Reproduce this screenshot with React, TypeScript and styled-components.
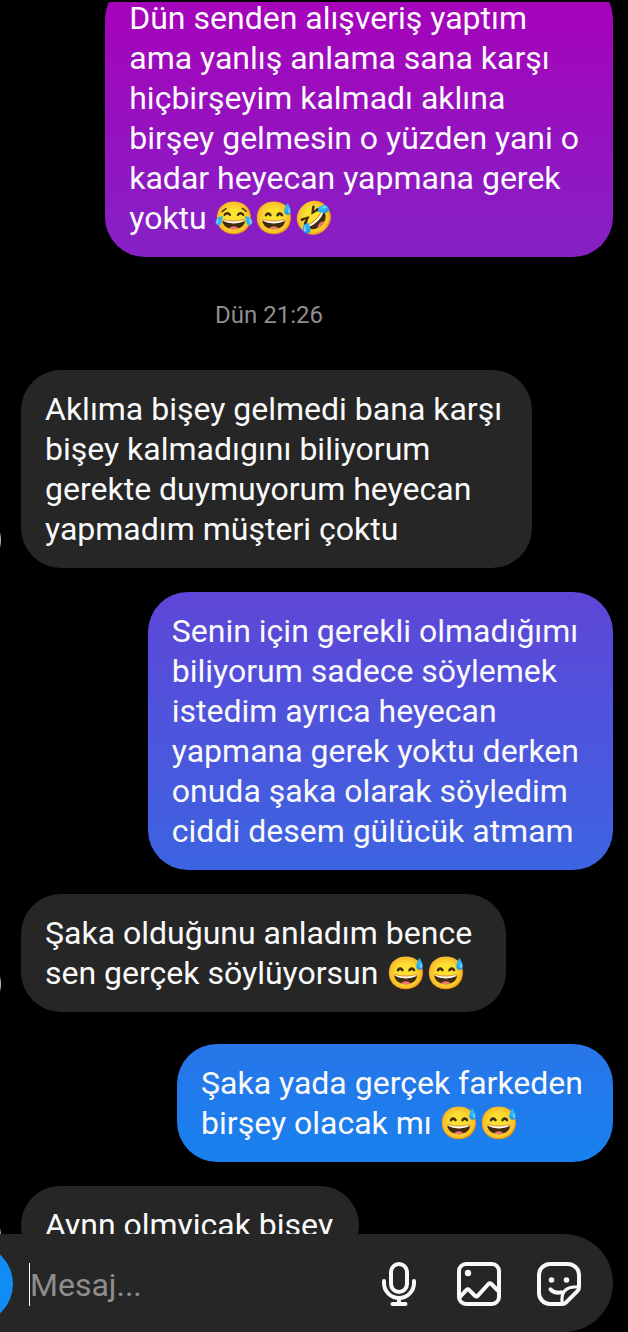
import React from "react";
import styled, { createGlobalStyle } from "styled-components";

const GlobalStyle = createGlobalStyle`
  * { box-sizing: border-box; }
  body { margin: 0; background: #000; }
`;

const Screen = styled.main`
  display: flex;
  flex-direction: column;
  height: 100vh;
  padding-top: 2px;
  overflow: hidden;
  background: #000;
  color: #fafafa;
  font-family: Roboto, "Noto Sans", "Noto Color Emoji", sans-serif;
`;

const Thread = styled.section`
  flex: 1;
  min-height: 0;
  display: flex;
  flex-direction: column;
  overflow: hidden;
  padding-right: 15px;
`;

const Row = styled.div<{ $own?: boolean; $gap?: number }>`
  display: flex;
  flex-shrink: 0;
  align-items: flex-end;
  justify-content: ${(p) => (p.$own ? "flex-end" : "flex-start")};
  margin-top: ${(p) => p.$gap ?? 24}px;
`;

const Avatar = styled.span`
  flex-shrink: 0;
  width: 56px;
  height: 56px;
  margin-left: -55px;
  margin-right: 20px;
  border-radius: 50%;
  background: #a9b8d0;
`;

const Bubble = styled.p<{ $fill?: string; $end?: number }>`
  margin: 0;
  padding: 19px ${(p) => p.$end ?? 34}px 19px 24px;
  border-radius: 40px;
  background: ${(p) => p.$fill ?? "#262626"};
  font-size: 32px;
  line-height: 40px;
  white-space: pre;
`;

const Stamp = styled.time`
  flex-shrink: 0;
  margin: 44px 75px 0 0;
  padding-bottom: 1px;
  color: #8e8e8e;
  font-size: 24px;
  line-height: 28px;
  text-align: center;
`;

const Composer = styled.form`
  display: flex;
  flex-shrink: 0;
  align-items: center;
  height: 98px;
  margin-right: 15px;
  padding: 2px 32px 0 0;
  gap: 36px;
  border-radius: 0 49px 49px 0;
  background: #262626;
`;

const CameraButton = styled.button`
  flex-shrink: 0;
  width: 80px;
  height: 80px;
  margin-left: -67px;
  margin-right: -20px;
  padding: 0;
  border: 0;
  border-radius: 50%;
  background: #0f8df5;
`;

const Field = styled.input`
  flex: 1;
  min-width: 0;
  height: 43px;
  padding: 2px 0 0;
  border: 0;
  border-left: 1px solid #fff;
  outline: 0;
  background: transparent;
  color: #fafafa;
  font: 32px/40px Roboto, sans-serif;
  &::placeholder { color: #8e8e8e; opacity: 1; }
`;

const IconButton = styled.button`
  flex-shrink: 0;
  width: 44px;
  height: 44px;
  padding: 0;
  border: 0;
  background: none;
  color: #f8f8f8;
  svg { display: block; }
`;

const Icon = ({ children }: { children: React.ReactNode }) => (
  <svg width="44" height="44" viewBox="0 0 44 44" fill="none" stroke="currentColor" strokeWidth="4" strokeLinecap="round" strokeLinejoin="round" aria-hidden="true">
    {children}
  </svg>
);

type Message = { text: string; own?: boolean; fill?: string; gap?: number; end?: number };

const first: Message = {
  own: true,
  gap: -23,
  fill: "linear-gradient(#a900b8, #8521c5)",
  text: "Dün senden alışveriş yaptım\nama yanlış anlama sana karşı\nhiçbirşeyim kalmadı aklına\nbirşey gelmesin o yüzden yani o\nkadar heyecan yapmana gerek\nyoktu 😂😅🤣",
};

const messages: Message[] = [
  { gap: 40, end: 30, text: "Aklıma bişey gelmedi bana karşı\nbişey kalmadıgını biliyorum\ngerekte duymuyorum heyecan\nyapmadım müşteri çoktu" },
  { own: true, fill: "linear-gradient(#5e46d7, #3c64e1)", text: "Senin için gerekli olmadığımı\nbiliyorum sadece söylemek\nistedim ayrıca heyecan\nyapmana gerek yoktu derken\nonuda şaka olarak söyledim\nciddi desem gülücük atmam" },
  { text: "Şaka olduğunu anladım bence\nsen gerçek söylüyorsun 😅😅" },
  { own: true, gap: 32, end: 30, fill: "linear-gradient(#2875e9, #1881ee)", text: "Şaka yada gerçek farkeden\nbirşey olacak mı 😅😅" },
  { end: 26, text: "Aynn olmyicak bişey" },
];

const MessageRow = ({ text, own, fill, gap, end }: Message) => (
  <Row $own={own} $gap={gap}>
    {!own && <Avatar />}
    <Bubble $fill={fill} $end={end}>{text}</Bubble>
  </Row>
);

export default function App() {
  return (
    <Screen>
      <GlobalStyle />
      <Thread>
        <MessageRow {...first} />
        <Stamp>Dün 21:26</Stamp>
        {messages.map((m) => (
          <MessageRow key={m.text} {...m} />
        ))}
      </Thread>
      <Composer>
        <CameraButton type="button" aria-label="Kamera" />
        <Field aria-label="Mesaj" placeholder="Mesaj..." />
        <IconButton type="button" aria-label="Ses kaydı">
          <Icon>
            <rect x="14" y="2" width="16" height="28" rx="8" />
            <path d="M7 19v2a15 15 0 0 0 30 0v-2M22 36v6M15.500 42h13" />
          </Icon>
        </IconButton>
        <IconButton type="button" aria-label="Galeri">
          <Icon>
            <rect x="2" y="2" width="40" height="40" rx="7" />
            <circle cx="11" cy="11" r="3.200" fill="currentColor" stroke="none" />
            <path d="M2.500 35.500 9.300 28.200q1.500-1.500 3 0l5.600 5.500q1.500 1.400 3 0L31.400 22q1.500-1.400 3 0l7.400 7.500" />
          </Icon>
        </IconButton>
        <IconButton type="button" aria-label="Çıkartma">
          <Icon>
            <path d="M42 25V13A11 11 0 0 0 31 2H13A11 11 0 0 0 2 13v18a11 11 0 0 0 11 11h12.500q2 0 3.400-1.400L40.600 28.900Q42 27.500 42 25Z" />
            <path d="M25 41.500V37C25 29.500 30 25 37 25H41.500" strokeWidth="3.200" />
            <path d="M13.500 27.300C16 30 20 31.200 24.500 30.300" />
            <circle cx="14.500" cy="18" r="2.800" fill="currentColor" stroke="none" />
            <circle cx="29.500" cy="18" r="2.800" fill="currentColor" stroke="none" />
          </Icon>
        </IconButton>
      </Composer>
    </Screen>
  );
}
